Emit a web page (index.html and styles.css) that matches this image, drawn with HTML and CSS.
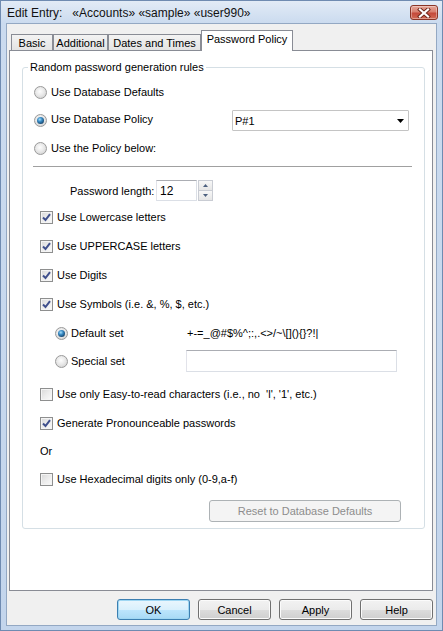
FILE: index.html
```html
<!DOCTYPE html>
<html>
<head>
<meta charset="utf-8">
<title>Edit Entry</title>
<link rel="stylesheet" href="styles.css">
</head>
<body>
<div class="window">
  <div class="titlebar">
    <span class="title">Edit Entry:&nbsp;&nbsp; «Accounts» «sample» «user990»</span>
    <div class="close">
      <svg width="14" height="10" viewBox="0 0 14 10">
        <path d="M3 1.5 L11 8.5 M11 1.5 L3 8.5" stroke="#6b2418" stroke-width="4" stroke-linecap="square" fill="none"/>
        <path d="M3 1.5 L11 8.5 M11 1.5 L3 8.5" stroke="#ffffff" stroke-width="2.2" stroke-linecap="square" fill="none"/>
      </svg>
    </div>
  </div>
  <div class="client">
    <div class="tabs">
      <div class="tab t-basic">Basic</div>
      <div class="tab t-add">Additional</div>
      <div class="tab t-dates">Dates and Times</div>
      <div class="tab t-pp active">Password Policy</div>
    </div>
    <div class="panel">
      <div class="group">
        <span class="legend">Random password generation rules</span>

        <div class="row r1 ind-radio"><span class="radio"></span><span class="lbl">Use Database Defaults</span></div>
        <div class="row r2 ind-radio">
          <span class="radio on"></span><span class="lbl up">Use Database Policy</span>
          <div class="combo"><span>P#1</span>
            <svg class="arrow" width="7" height="4" viewBox="0 0 7 4"><path d="M0 0 L7 0 L3.5 4 Z" fill="#000"/></svg>
          </div>
        </div>
        <div class="row r3 ind-radio"><span class="radio"></span><span class="lbl">Use the Policy below:</span></div>

        <div class="sep"></div>

        <div class="row rpw">
          <span class="pwlabel">Password length:</span>
          <div class="input num">12</div>
          <div class="spin">
            <div class="sbtn"><svg width="5" height="3" viewBox="0 0 5 3"><path d="M0 3 L5 3 L2.5 0 Z" fill="#4c607f"/></svg></div>
            <div class="sbtn"><svg width="5" height="3" viewBox="0 0 5 3"><path d="M0 0 L5 0 L2.5 3 Z" fill="#4c607f"/></svg></div>
          </div>
        </div>

        <div class="row rc1 ind-check"><span class="check on"><svg width="11" height="11" viewBox="0 0 11 11"><path d="M2 5.5 L4.5 8 L9 2.2" stroke="#3f4f8c" stroke-width="2" fill="none"/></svg></span><span class="lbl">Use Lowercase letters</span></div>
        <div class="row rc ind-check"><span class="check on"><svg width="11" height="11" viewBox="0 0 11 11"><path d="M2 5.5 L4.5 8 L9 2.2" stroke="#3f4f8c" stroke-width="2" fill="none"/></svg></span><span class="lbl">Use UPPERCASE letters</span></div>
        <div class="row rc ind-check"><span class="check on"><svg width="11" height="11" viewBox="0 0 11 11"><path d="M2 5.5 L4.5 8 L9 2.2" stroke="#3f4f8c" stroke-width="2" fill="none"/></svg></span><span class="lbl">Use Digits</span></div>
        <div class="row rc ind-check"><span class="check on"><svg width="11" height="11" viewBox="0 0 11 11"><path d="M2 5.5 L4.5 8 L9 2.2" stroke="#3f4f8c" stroke-width="2" fill="none"/></svg></span><span class="lbl">Use Symbols (i.e. &amp;, %, $, etc.)</span></div>

        <div class="row rdef ind-sub">
          <div class="subl"><span class="radio on"></span><span class="lbl">Default set</span></div>
          <span class="symbols">+-=_@#$%^;:,.&lt;&gt;/~\[](){}?!|</span>
        </div>
        <div class="row rspec ind-sub">
          <div class="subl"><span class="radio"></span><span class="lbl">Special set</span></div>
          <div class="input wide"></div>
        </div>

        <div class="row reasy ind-check"><span class="check"></span><span class="lbl">Use only Easy-to-read characters (i.e., no &nbsp;'l', '1', etc.)</span></div>
        <div class="row rc ind-check"><span class="check on"><svg width="11" height="11" viewBox="0 0 11 11"><path d="M2 5.5 L4.5 8 L9 2.2" stroke="#3f4f8c" stroke-width="2" fill="none"/></svg></span><span class="lbl">Generate Pronounceable passwords</span></div>
        <div class="row ror ind-or"><span class="lbl">Or</span></div>
        <div class="row ror ind-check"><span class="check"></span><span class="lbl">Use Hexadecimal digits only (0-9,a-f)</span></div>

        <div class="row rreset"><div class="btn disabled">Reset to Database Defaults</div></div>
      </div>
    </div>
    <div class="buttons">
      <div class="btn dlg default">OK</div>
      <div class="btn dlg">Cancel</div>
      <div class="btn dlg">Apply</div>
      <div class="btn dlg">Help</div>
    </div>
  </div>
</div>
</body>
</html>
```

FILE: styles.css
```css
* { box-sizing: border-box; }
html, body { margin: 0; padding: 0; }
body {
  width: 443px;
  height: 631px;
  overflow: hidden;
  font-family: "Liberation Sans", Arial, sans-serif;
  font-size: 11px;
  color: #000;
  background: #c4d5ec;
}

.window {
  width: 443px;
  height: 631px;
  border: 1px solid #6f8bb1;
  background: linear-gradient(#e2ebf6 0, #cbdbef 22px, #c3d5ec 100%);
  display: flex;
  flex-direction: column;
}

.titlebar {
  height: 22px;
  display: flex;
  align-items: flex-start;
  flex: none;
}
.title {
  margin-left: 6px;
  margin-top: 5px;
  font-size: 12px;
  line-height: 14px;
  color: #111;
  white-space: nowrap;
}
.close {
  margin-left: auto;
  margin-right: 4px;
  margin-top: 4px;
  width: 28px;
  height: 15px;
  border: 1px solid #8a3426;
  border-radius: 3px;
  background: linear-gradient(#e6a597 0, #d88070 45%, #c4493a 55%, #d26a55 100%);
  box-shadow: inset 0 0 0 1px rgba(255,255,255,0.35);
  display: flex;
  align-items: center;
  justify-content: center;
}

.client {
  flex: 1;
  margin: 0 5px 4px 5px;
  border: 1px solid #93a8c3;
  background: #f0f0f0;
  display: flex;
  flex-direction: column;
}

.tabs {
  margin-top: 6px;
  margin-left: 4px;
  height: 20px;
  display: flex;
  align-items: flex-end;
  flex: none;
}
.tab {
  height: 16px;
  border: 1px solid #898c95;
  border-bottom: none;
  background: linear-gradient(#f3f3f3, #e3e3e3);
  display: flex;
  align-items: center;
  justify-content: center;
  white-space: nowrap;
  padding-top: 1px;
}
.t-basic { width: 42px; }
.t-add { width: 55px; margin-left: 0; }
.t-dates { width: 93px; }
.t-pp { width: 92px; }
.tab.active {
  height: 21px;
  margin-bottom: -1px;
  background: #fff;
  position: relative;
  z-index: 2;
  padding-top: 0;
  padding-bottom: 4px;
}

.panel {
  margin-left: 2px;
  width: 424px;
  height: 541px;
  border: 1px solid #898c95;
  background: #fff;
  flex: none;
  padding: 16px 7px 0 12px;
}

.group {
  position: relative;
  border: 1px solid #d5dfe5;
  border-radius: 3px;
  padding-bottom: 6px;
  display: flex;
  flex-direction: column;
}
.legend {
  position: absolute;
  left: 5px;
  top: -8px;
  padding: 0 2px;
  background: #fff;
  line-height: 14px;
  white-space: nowrap;
}

.row {
  display: flex;
  align-items: center;
  white-space: nowrap;
  flex: none;
}
.lbl { line-height: 13px; }
.ind-radio { padding-left: 11px; }
.ind-radio .lbl { margin-left: 4px; }
.ind-check { padding-left: 17px; }
.ind-check .lbl { margin-left: 4px; }
.ind-sub { padding-left: 32px; }
.ind-or { padding-left: 17px; }

.r1 { margin-top: 14px; height: 20px; }
.r2 { margin-top: 8px; height: 21px; padding-right: 15px; }
.r3 { margin-top: 7px; height: 20px; }
.sep { margin: 8px 12px 0 10px; height: 1px; background: #a0a0a0; flex: none; }
.rpw { margin-top: 13px; height: 21px; padding-left: 47px; }
.rc1 { margin-top: 6px; height: 20px; }
.rc { margin-top: 9px; height: 20px; }
.rdef { margin-top: 9px; height: 20px; }
.rspec { margin-top: 7px; height: 22px; }
.reasy { margin-top: 12px; height: 20px; }
.ror { margin-top: 8px; height: 20px; }
.rreset { margin-top: 11px; height: 22px; padding-left: 186px; }

.up { margin-bottom: 3px; }

.radio {
  width: 13px;
  height: 13px;
  border-radius: 50%;
  border: 1px solid #9a9a9a;
  background: radial-gradient(circle at 45% 40%, #fdfdfd 0, #e9e9e9 45%, #c9c9c9 100%);
  position: relative;
  flex: none;
}
.radio.on::after {
  content: "";
  position: absolute;
  left: 2px;
  top: 2px;
  width: 7px;
  height: 7px;
  border-radius: 50%;
  background: radial-gradient(circle at 40% 35%, #a8e0fb 0, #3a8cc6 35%, #17476f 75%, #0e2f4d 100%);
}

.check {
  width: 13px;
  height: 13px;
  border: 1px solid #8e8f8f;
  background: linear-gradient(135deg, #d8d8d8 0, #ececec 50%, #fbfbfb 100%);
  box-shadow: inset 0 0 0 1px #f4f4f4;
  display: flex;
  align-items: center;
  justify-content: center;
  flex: none;
}

.combo {
  margin-left: auto;
  width: 177px;
  height: 21px;
  border: 1px solid #c4c4c4;
  border-radius: 1px;
  background: #fff;
  display: flex;
  align-items: center;
  padding-left: 2px;
  padding-right: 4px;
}
.combo .arrow { margin-left: auto; }

.pwlabel {
  width: 82px;
  text-align: right;
}
.input {
  height: 21px;
  border: 1px solid #dbdfe6;
  border-top-color: #abadb3;
  border-left-color: #e2e3ea;
  background: #fff;
}
.num {
  margin-left: 4px;
  width: 41px;
  padding-left: 3px;
  display: flex;
  align-items: center;
  font-size: 12px;
}
.spin {
  margin-left: 1px;
  width: 15px;
  height: 21px;
  display: flex;
  flex-direction: column;
}
.sbtn {
  flex: 1;
  border: 1px solid #c9ccd3;
  background: linear-gradient(#f7f7f7, #e6e6e6);
  display: flex;
  align-items: center;
  justify-content: center;
}
.sbtn + .sbtn { border-top: none; }

.subl {
  width: 132px;
  display: flex;
  align-items: center;
}
.subl .lbl { margin-left: 3px; }
.symbols { margin-left: 0; }
.wide { width: 211px; height: 22px; margin-left: -1px; }

.btn {
  height: 22px;
  border: 1px solid #707070;
  border-radius: 3px;
  background: linear-gradient(#f2f2f2 0, #ebebeb 50%, #dddddd 50%, #cfcfcf 100%);
  box-shadow: inset 0 0 0 1px #fbfbfb;
  display: flex;
  align-items: center;
  justify-content: center;
  white-space: nowrap;
}
.btn.disabled {
  width: 192px;
  border-color: #adb2b5;
  background: #f4f4f4;
  box-shadow: none;
  color: #8d8d8d;
}

.buttons {
  margin-top: 8px;
  display: flex;
  justify-content: flex-end;
  gap: 8px;
  padding-right: 3px;
  flex: none;
}
.btn.dlg { width: 73px; height: 21px; }
.btn.default {
  border-color: #3c7fb1;
  background: linear-gradient(#eaf6fd 0, #d9f0fc 50%, #bee6fd 50%, #a7d9f5 100%);
  box-shadow: inset 0 0 0 1px #9fd7f3;
}
```
